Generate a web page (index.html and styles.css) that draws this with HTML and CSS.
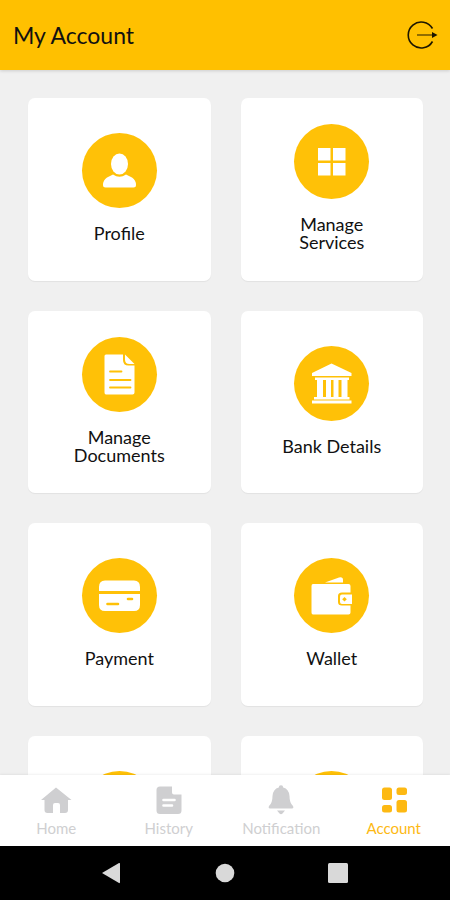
FILE: index.html
```html
<!DOCTYPE html>
<html lang="en">
<head>
<meta charset="utf-8">
<meta name="viewport" content="width=device-width, initial-scale=1">
<title>My Account</title>
<link rel="stylesheet" href="styles.css">
</head>
<body>
<header class="topbar">
  <h1 class="title">My Account</h1>
  <button class="logout" type="button" aria-label="Log out">
    <svg width="32" height="30" viewBox="0 0 32 30" fill="none" stroke="#1c1600" stroke-width="1.6">
      <path d="M26.500 8.500A13 13 0 1 0 26.500 21.500"/>
      <path d="M11 15H27" stroke="#6b5200" stroke-width="1.5"/>
      <path d="M26 12L31.500 15L26 18Z" fill="#1c1600" stroke="none"/>
    </svg>
  </button>
</header>

<main class="content">
  <div class="grid">
    <a class="card" href="#">
      <span class="disc">
        <svg viewBox="0 0 75 75" fill="#fff">
          <ellipse cx="37.500" cy="31" rx="8.500" ry="10.500"/>
          <path d="M31 41.500Q37.500 46 44 41.500L50 44.500Q54 47 54 52Q54 54.500 51.500 54.500H23.500Q21 54.500 21 52Q21 47 25 44.500Z"/>
        </svg>
      </span>
      <span class="label">Profile</span>
    </a>
    <a class="card" href="#">
      <span class="disc">
        <svg viewBox="0 0 75 75" fill="#fff">
          <path d="M24 24H36.500V36.500H24ZM39 24H51.500V36.500H39ZM24 39H36.500V51.500H24ZM39 39H51.500V51.500H39Z"/>
        </svg>
      </span>
      <span class="label">Manage<br>Services</span>
    </a>
    <a class="card" href="#">
      <span class="disc">
        <svg viewBox="0 0 75 75" fill="#fff">
          <path d="M24 17.500H41V23Q41 28.500 46.500 28.500H52.500V55.500Q52.500 57.500 50.500 57.500H24Q22.500 57.500 22.500 55.500V19Q22.500 17.500 24 17.500Z"/>
          <path d="M43 17.500L52.500 27H47.500Q43 27 43 22.500Z"/>
          <path d="M28 34.500H39.500M28 43H48.500M28 50.500H48.500" stroke="#ffc107" stroke-width="1.8" stroke-linecap="round"/>
        </svg>
      </span>
      <span class="label">Manage<br>Documents</span>
    </a>
    <a class="card" href="#">
      <span class="disc">
        <svg viewBox="0 0 75 75" fill="#fff">
          <path d="M37.500 17.500L57.500 27V30H18V27ZM21 31.500H55V34H21ZM23 34H29V51H23ZM32 34H37V51H32ZM39.500 34H44.500V51H39.500ZM47.500 34H53.500V51H47.500ZM20 51H55.500V53.500H20ZM18 54.500H57.500V57.500H18Z"/>
        </svg>
      </span>
      <span class="label">Bank Details</span>
    </a>
    <a class="card" href="#">
      <span class="disc">
        <svg viewBox="0 0 75 75" fill="#fff">
          <path d="M17 33V29Q17 22.500 23 22.500H52Q58 22.500 58 29V33ZM17 36H58V47Q58 53 52 53H23Q17 53 17 47Z"/>
          <path d="M25.500 46H36M46 41H50" stroke="#ffc107" stroke-width="2.600" stroke-linecap="round"/>
        </svg>
      </span>
      <span class="label">Payment</span>
    </a>
    <a class="card" href="#">
      <span class="disc">
        <svg viewBox="0 0 75 75" fill="#fff">
          <path d="M31 24.500L45 19.500Q49 18.500 49 22V24.500Z"/>
          <path d="M19 26H54.500Q56.500 26 56.500 28V34.500H48Q44 34.500 44 38V44Q44 47.500 48 47.500H56.500V54.500Q56.500 56.500 54.500 56.500H19Q17.500 56.500 17.500 54.500V28Q17.500 26 19 26Z"/>
          <path d="M48 36.500H58V46H48Q46 46 46 44V38.500Q46 36.500 48 36.500Z"/>
          <path d="M50.500 39L52.800 41.200L50.500 43.500L48.200 41.200Z" fill="#ffc107"/>
        </svg>
      </span>
      <span class="label">Wallet</span>
    </a>
    <div class="card"><span class="disc"></span><span class="label"></span></div>
    <div class="card"><span class="disc"></span><span class="label"></span></div>
  </div>
</main>

<nav class="tabs">
  <a class="tab" href="#">
    <svg width="32" height="30" viewBox="0 0 32 30" fill="currentColor">
      <path d="M16 2.500L31.500 15H28V25Q28 28 25 28H20V20Q20 18 18 18H15Q13 18 13 20V28H7.500Q4.500 28 4.500 25V15H1Z"/>
    </svg>
    <span>Home</span>
  </a>
  <a class="tab" href="#">
    <svg width="32" height="30" viewBox="0 0 32 30" fill="currentColor">
      <path d="M7 1.500H19V7.500Q19 9.500 21 9.500H28.500V25.500Q28.500 29 25 29H7Q3.500 29 3.500 25.500V5Q3.500 1.500 7 1.500Z"/>
      <path d="M10.500 15H21.500M10.500 20.500H19" stroke="#fff" stroke-width="2.600" stroke-linecap="round"/>
    </svg>
    <span>History</span>
  </a>
  <a class="tab" href="#">
    <svg width="32" height="30" viewBox="0 0 32 30" fill="currentColor">
      <path d="M13.800 2.500A2.200 2.200 0 0 1 18.200 2.500Q24 4 24.500 11Q24.500 18 28 21Q29 23.500 27 23.500H5Q3 23.500 4 21Q7.500 18 7.500 11Q8 4 13.800 2.500ZM12 25.500H20L17.500 28.500Q16 29.800 14.500 28.500Z"/>
    </svg>
    <span>Notification</span>
  </a>
  <a class="tab active" href="#" aria-current="page">
    <svg width="32" height="30" viewBox="0 0 32 30" fill="currentColor">
      <rect x="4" y="2.500" width="10" height="12.500" rx="2.500"/>
      <rect x="18.500" y="2.500" width="10.500" height="7.500" rx="2.500"/>
      <rect x="4" y="20" width="10" height="7.500" rx="2.500"/>
      <rect x="18.500" y="15" width="10.500" height="12.500" rx="2.500"/>
    </svg>
    <span>Account</span>
  </a>
</nav>

<footer class="system">
  <button type="button" aria-label="Back"><svg width="22" height="22" viewBox="0 0 22 22" fill="#d9d9d9"><path d="M1 11L18 1Q19 .5 19 2V20Q19 21.500 18 21Z"/></svg></button>
  <button type="button" aria-label="Home screen"><svg width="22" height="22" viewBox="0 0 22 22" fill="#d9d9d9"><circle cx="11" cy="11" r="9.300"/></svg></button>
  <button type="button" aria-label="Recent apps"><svg width="22" height="22" viewBox="0 0 22 22" fill="#d9d9d9"><rect x="1" y="1" width="20" height="20" rx="1.500"/></svg></button>
</footer>
</body>
</html>
```

FILE: styles.css
```css
* { box-sizing: border-box; }

body {
  margin: 0;
  height: 100vh;
  display: flex;
  flex-direction: column;
  background: #f0f0f0;
  color: #111;
  font-family: Lato, "Liberation Sans", sans-serif;
}

a { color: inherit; text-decoration: none; }

button {
  display: flex;
  padding: 0;
  border: 0;
  background: none;
}

.topbar {
  display: flex;
  align-items: center;
  justify-content: space-between;
  flex: none;
  height: 70px;
  padding: 0 12px 0 13px;
  background: #ffc000;
  box-shadow: 0 1px 3px rgba(0, 0, 0, 0.15);
}

.title {
  margin: 0;
  font-size: 23px;
  line-height: 30px;
  font-weight: 400;
}

.content {
  flex: 1;
  min-height: 0;
  overflow: hidden;
  padding: 28px 27px 0 28px;
}

.grid {
  display: grid;
  grid-template-columns: 1fr 1fr;
  gap: 30px;
}

.card {
  display: flex;
  flex-direction: column;
  align-items: center;
  justify-content: center;
  gap: 16px;
  aspect-ratio: 1;
  padding-bottom: 3px;
  border-radius: 7px;
  background: #fff;
  box-shadow: 0 1px 1px rgba(0, 0, 0, 0.06);
}

.disc {
  width: 75px;
  height: 75px;
  border-radius: 50%;
  background: #ffc107;
}

.disc svg { display: block; }

.label {
  min-height: 18px;
  font-size: 18px;
  line-height: 18px;
  text-align: center;
}

.tabs {
  display: grid;
  grid-template-columns: repeat(4, 1fr);
  flex: none;
  height: 71px;
  padding-top: 10px;
  background: #fff;
  box-shadow: 0 -1px 2px rgba(0, 0, 0, 0.06);
}

.tab {
  display: flex;
  flex-direction: column;
  align-items: center;
  gap: 4px;
  color: #cfcfd1;
  font-size: 15px;
  line-height: 18px;
}

.tab.active { color: #fdb913; }

.system {
  display: grid;
  grid-template-columns: repeat(3, 1fr);
  justify-items: center;
  align-items: center;
  flex: none;
  height: 54px;
  padding: 0 56px;
  background: #000;
}
```
